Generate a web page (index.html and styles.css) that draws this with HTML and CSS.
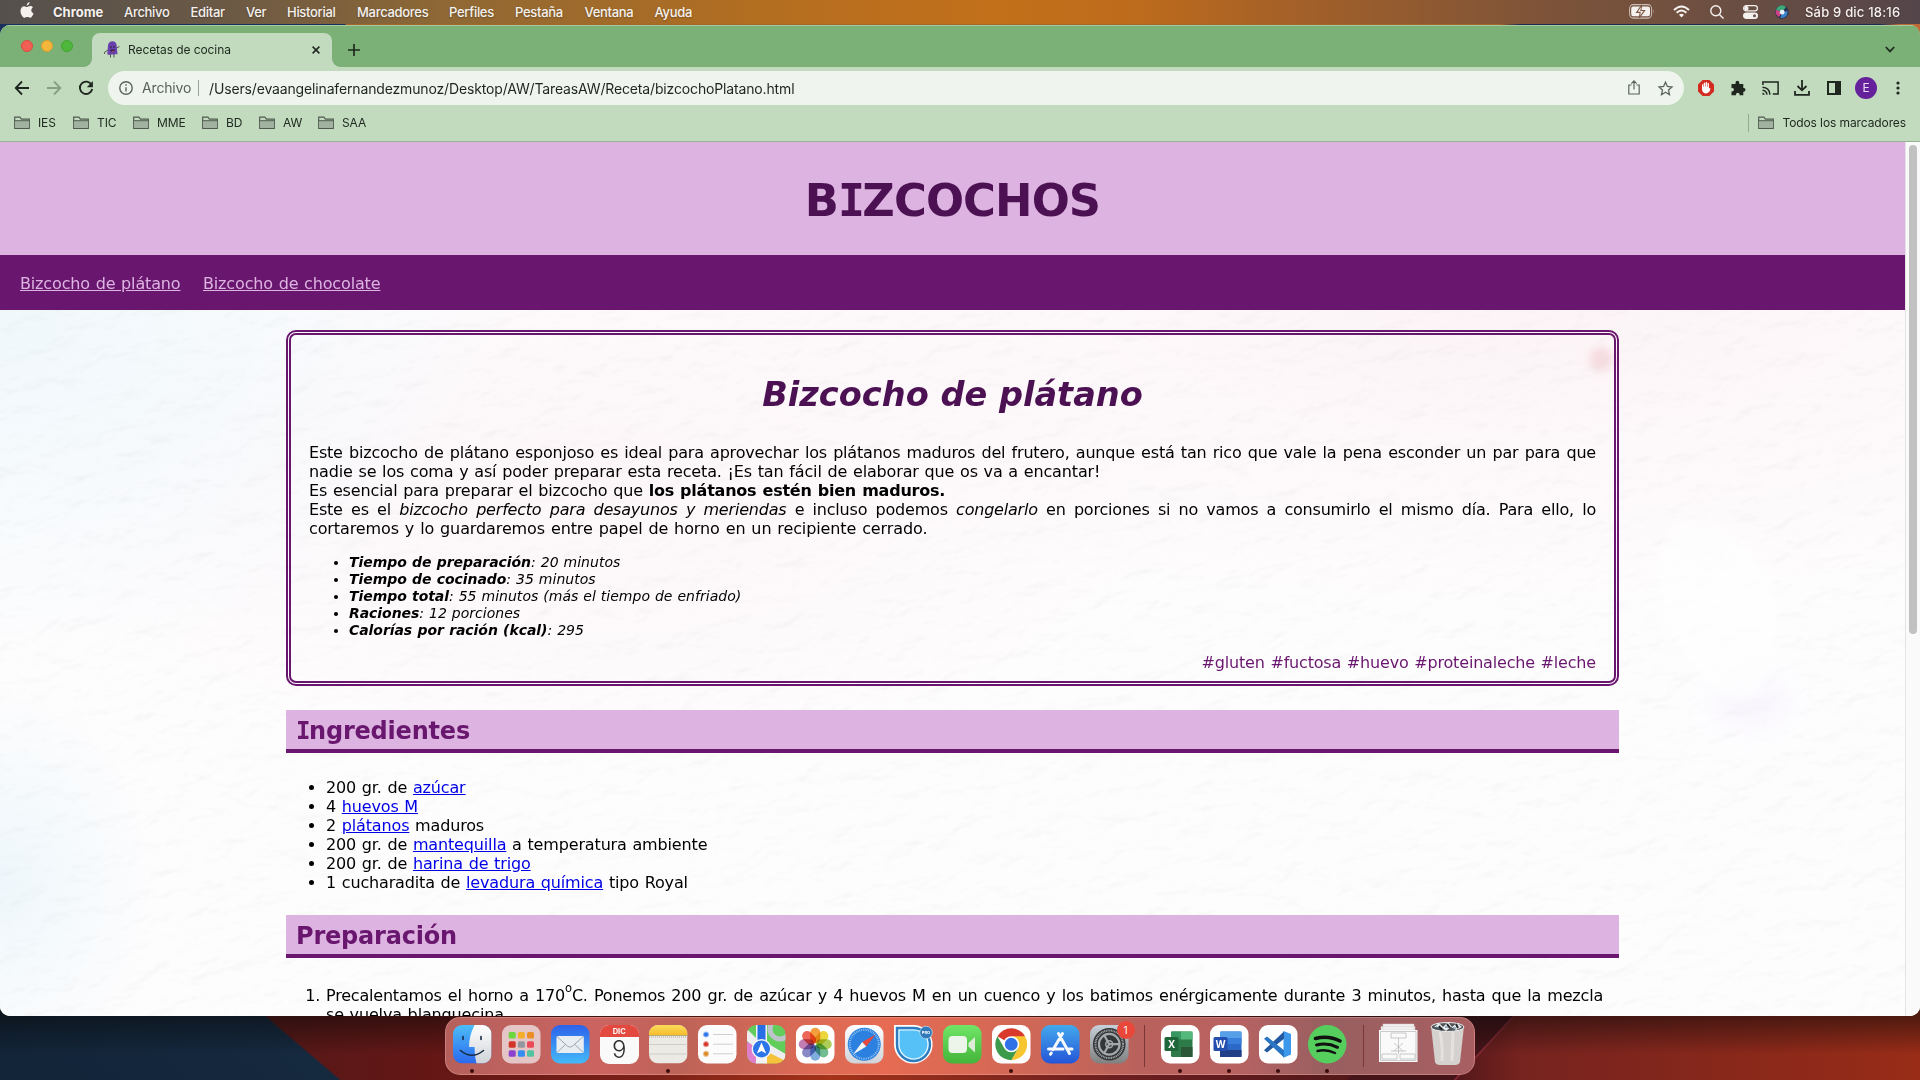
FILE: index.html
```html
<!DOCTYPE html>
<html lang="es">
<head>
<meta charset="utf-8">
<title>Recetas de cocina</title>
<link rel="stylesheet" href="styles.css">
</head>
<body>
<svg class="defs" width="0" height="0" aria-hidden="true">
  <defs>
    <symbol id="folder" viewBox="0 0 16 14"><path d="M.7 12.3V1.2h5.2l1.5 1.9h7.9v9.2z" fill="#c3dcbf" stroke="#505a50" stroke-width="1.2"/><path d="M1.3 5h13.4v7H1.3z" fill="#a1b3a0"/><path d="M.7 4.7h14.6" stroke="#505a50"/></symbol>
    <linearGradient id="gFinder" x2="0" y2="1"><stop stop-color="#4cbdf8"/><stop offset="1" stop-color="#2b68ee"/></linearGradient>
    <linearGradient id="gBlue" x2="0" y2="1"><stop stop-color="#2c62ea"/><stop offset="1" stop-color="#45b9f9"/></linearGradient>
    <linearGradient id="gStore" x2="0" y2="1"><stop stop-color="#43a9ec"/><stop offset="1" stop-color="#2455d8"/></linearGradient>
    <linearGradient id="gGrey" x2="0" y2="1"><stop stop-color="#ffffff"/><stop offset="1" stop-color="#cfd3d8"/></linearGradient>
    <linearGradient id="gSet" x2="0" y2="1"><stop stop-color="#c6d0da"/><stop offset="1" stop-color="#808080"/></linearGradient>
    <linearGradient id="gGreen" x2="0" y2="1"><stop stop-color="#70e566"/><stop offset="1" stop-color="#43b53a"/></linearGradient>
    <linearGradient id="gNote" x2="0" y2="1"><stop stop-color="#fbdc5c"/><stop offset="1" stop-color="#f5bd2a"/></linearGradient>
    <clipPath id="tile"><rect width="38.5" height="38.5" rx="9"/></clipPath>
  </defs>
</svg>

<header class="menubar">
  <svg class="apple" width="14" height="17" viewBox="0 0 14 17"><path d="M9.600 0C9.700 1.700 8.400 3.400 6.800 3.500 6.600 1.900 8 .300 9.600 0zM12.900 5.400c-1 .700-1.600 1.600-1.600 2.900 0 1.500.9 2.600 2.200 3.100-.6 1.800-2 4.300-3.400 4.300-1 0-1.500-.6-2.700-.6s-1.700.6-2.700.6C2.800 15.700.5 12.100.5 8.900.5 5.900 2.300 4.200 4.200 4.200c1.200 0 2.200.8 2.900.8.700 0 1.800-.9 3.200-.9 1 0 2 .5 2.600 1.300z" fill="#f4f1ee"/></svg>
  <nav class="menus"><b>Chrome</b><span>Archivo</span><span>Editar</span><span>Ver</span><span>Historial</span><span>Marcadores</span><span>Perfiles</span><span>Pestaña</span><span>Ventana</span><span>Ayuda</span></nav>
  <div class="status">
    <svg width="26" height="15" viewBox="0 0 26 13" preserveAspectRatio="none"><rect x=".6" y=".6" width="22" height="11.600" rx="3.500" fill="none" stroke="#c9beb6"/><rect x="2.200" y="2.200" width="18.800" height="8.400" rx="2" fill="#f5f1ee"/><path d="M24.200 4.500q1.400 1.900 0 3.800z" fill="#c9beb6"/><path d="M12.800.8 7.600 7.200h3.600L10.200 12l5.400-6.400h-3.700z" fill="#f5f1ee" stroke="#7a5541"/></svg>
    <svg width="17" height="13" viewBox="0 0 17 13" fill="none" stroke="#f5f1ee" stroke-width="2"><path d="M1 5Q8.500-2 16 5M3.600 7.700q4.900-4.400 9.800 0"/><path d="M8.500 12.500 6 9.800q2.500-2 5 0z" fill="#f5f1ee" stroke="none"/></svg>
    <svg width="14" height="14" viewBox="0 0 14 14" fill="none" stroke="#f5f1ee" stroke-width="1.400"><circle cx="5.800" cy="5.800" r="5"/><path d="m9.400 9.400 4.100 4.100"/></svg>
    <svg width="15" height="14" viewBox="0 0 15 14" fill="none" stroke="#f5f1ee" stroke-width="1.200"><rect x=".6" y=".6" width="13.800" height="5.200" rx="2.600"/><circle cx="3.400" cy="3.200" r="1.600" fill="#f5f1ee"/><rect x=".6" y="8" width="13.800" height="5.400" rx="2.700" fill="#f5f1ee"/><circle cx="11.500" cy="10.700" r="1.500" fill="#6c5148" stroke="none"/></svg>
    <svg width="14" height="14" viewBox="0 0 14 14"><circle cx="7" cy="7" r="6.800" fill="#29344f"/><path d="M1 5a6 6 0 0 1 10-3L7 7z" fill="#3ea878"/><path d="M1 5a6 6 0 0 0 3 7l3-5z" fill="#cf4285"/><path d="M12.500 6a6 6 0 0 1-7 7L7 7z" fill="#3b82cb"/><circle cx="7.200" cy="7.200" r="2.400" fill="#e9f4fa"/></svg>
    <time>Sáb 9 dic 18:16</time>
  </div>
</header>

<main class="window">
  <div class="tabstrip">
    <div class="lights"><i class="red"></i><i class="amber"></i><i class="green"></i></div>
    <div class="tab">
      <svg width="16" height="17" viewBox="0 0 16 17"><path d="M3.300 13.500 4 4Q5 .3 8.400.3 12 .5 12.600 4l.9 9.500-2-.5-1.800 1-1.600-.8-1.800.8z" fill="#6941ad"/><path d="M4 9 .6 11.200V13M12.500 7l3-1.500M6.500 13.500v3M10 13.500v3" stroke="#555" fill="none"/><path d="M6 8.500h5q-.5 2.800-2.500 2.800T6 8.500z" fill="#3b1f55"/><path d="M7 10.300h3l-1 1z" fill="#e3655c"/><circle cx="7" cy="6" r=".8" fill="#222"/><circle cx="10" cy="6" r=".8" fill="#222"/></svg>
      <span>Recetas de cocina</span>
      <svg class="x" width="8" height="8" viewBox="0 0 8 8" stroke="#202620" stroke-width="1.500"><path d="m.6.6 6.800 6.800M7.400.6.600 7.400"/></svg>
    </div>
    <svg class="plus" width="12" height="12" viewBox="0 0 12 12" stroke="#1c2a1c" stroke-width="1.700"><path d="M6 0v12M0 6h12"/></svg>
    <svg class="chevron" width="10" height="7" viewBox="0 0 10 7" fill="none" stroke="#1c2a1c" stroke-width="1.700"><path d="m.8 1 4.200 4.400L9.200 1"/></svg>
  </div>

  <div class="toolbar">
    <svg width="16" height="16" viewBox="0 0 16 16" fill="none" stroke="#1f261f" stroke-width="1.800"><path d="M15 8H2M8 1.500 1.700 8 8 14.500"/></svg>
    <svg width="16" height="16" viewBox="0 0 16 16" fill="none" stroke="#86a084" stroke-width="1.800"><path d="M1 8h13M8 1.500 14.300 8 8 14.500"/></svg>
    <svg width="16" height="16" viewBox="0 0 16 16" fill="none" stroke="#1f261f" stroke-width="1.900"><path d="M13.600 4.900A6.200 6.200 0 1 0 14.200 9"/><path d="M14.900 1v6.200H8.800z" fill="#1f261f" stroke="none"/></svg>
    <div class="omnibox">
      <svg width="14" height="14" viewBox="0 0 14 14" fill="none" stroke="#5b635c" stroke-width="1.400"><circle cx="7" cy="7" r="6.200"/><path d="M7 6.200v4.300M7 3.300v1.500"/></svg>
      <span class="scheme">Archivo</span><span class="url">/Users/evaangelinafernandezmunoz/Desktop/AW/TareasAW/Receta/bizcochoPlatano.html</span>
      <svg class="share" width="12" height="15" viewBox="0 0 12 15" fill="none" stroke="#5b635c" stroke-width="1.200"><path d="M3.500 5H.8v9h10.400V5H8.500M6 9.500V1.200M3.300 3.600 6 .9l2.700 2.700"/></svg>
      <svg width="15" height="15" viewBox="0 0 15 15" fill="none" stroke="#5b635c" stroke-width="1.300"><path d="m7.500 1.200 1.900 4.300 4.600.5-3.500 3.100 1 4.600-4-2.400-4 2.400 1-4.600L1 6l4.600-.5z"/></svg>
    </div>
    <div class="actions">
      <svg width="18" height="18" viewBox="0 0 18 18"><path d="M5.600 1h6.800L17 5.600v6.800L12.400 17H5.600L1 12.400V5.600z" fill="#d32b20"/><path d="M5 9.500V5.600q.7-.8 1.300 0V8l.5-.2V4q.7-.9 1.400 0v3.600h.5V3.300q.7-.8 1.400 0v4.400l.5.100V4.300q.7-.8 1.300 0v5.200q1-.8 1.500 0-.6 4.700-4.600 5Q5 14 5 9.500z" fill="#fff"/></svg>
      <svg width="16" height="16" viewBox="0 0 16 16"><path d="M1.500 4h4V3q0-2.300 1.900-2.300T9.300 3v1h4v4h.6q1.600.2 1.600 1.800t-1.600 1.900h-.6v3.600H9.600v-1q-.2-1.600-1.800-1.600T6 14.300v1H1.500v-3.900h.8q1.700-.2 1.700-1.800T2.300 7.900h-.8z" fill="#1f261f"/></svg>
      <svg width="17" height="14" viewBox="0 0 17 14" fill="none" stroke="#1f261f" stroke-width="1.500"><path d="M.9 4V.9h15.200v12.200h-5.300M.5 6.200q7 .3 7.400 7.400M.5 9.200q4 .4 4.500 4.400"/><path d="M.5 11.600q2 .2 2.200 2.200H.5z" fill="#1f261f" stroke="none"/></svg>
      <svg width="16" height="16" viewBox="0 0 16 16" fill="none" stroke="#1f261f" stroke-width="1.800"><path d="M8 0v10M3.500 6 8 10.300 12.500 6M1 11v3.800h14V11"/></svg>
      <svg width="14" height="14" viewBox="0 0 14 14"><path d="M0 0h14v14H0zM2 2v10h6V2z" fill="#1f261f" fill-rule="evenodd"/></svg>
      <span class="avatar">E</span>
      <svg width="4" height="14" viewBox="0 0 4 14" fill="#1f261f"><circle cx="2" cy="2" r="1.600"/><circle cx="2" cy="7" r="1.600"/><circle cx="2" cy="12" r="1.600"/></svg>
    </div>
  </div>

  <div class="bookmarks">
    <div class="marks">
      <span><svg width="16" height="14"><use href="#folder"/></svg>IES</span><span><svg width="16" height="14"><use href="#folder"/></svg>TIC</span><span><svg width="16" height="14"><use href="#folder"/></svg>MME</span><span><svg width="16" height="14"><use href="#folder"/></svg>BD</span><span><svg width="16" height="14"><use href="#folder"/></svg>AW</span><span><svg width="16" height="14"><use href="#folder"/></svg>SAA</span>
    </div>
    <span class="all"><svg width="16" height="14"><use href="#folder"/></svg>Todos los marcadores</span>
  </div>

  <div class="viewport">
    <div class="page">
      <svg class="paper" width="1905" height="874" aria-hidden="true">
        <filter id="grain" x="0" y="0" width="100%" height="100%" color-interpolation-filters="sRGB"><feTurbulence type="fractalNoise" baseFrequency=".03 .05" numOctaves="3" seed="8"/><feDiffuseLighting surfaceScale="3" diffuseConstant="1.150" lighting-color="#fff"><feDistantLight azimuth="250" elevation="60"/></feDiffuseLighting></filter>
        <filter id="soft" x="-100%" y="-100%" width="300%" height="300%"><feGaussianBlur stdDeviation="14"/></filter>
        <filter id="faint" x="-100%" y="-100%" width="300%" height="300%"><feGaussianBlur stdDeviation="4"/></filter>
        <g transform="rotate(-8 950 440)" opacity=".075"><rect x="-150" y="-260" width="2250" height="1400" filter="url(#grain)"/></g>
        <ellipse cx="1601" cy="217" rx="12" ry="12" fill="#e9a9b3" opacity=".3" filter="url(#faint)"/>
        <ellipse cx="1750" cy="560" rx="42" ry="28" fill="#eeeafc" opacity=".3" filter="url(#soft)"/>
      </svg>
      <svg class="paper glow" width="1905" height="874" aria-hidden="true"><path d="M1690 380q60 10 80 60 15 50-10 110-30 20-60-20-50-60-40-110 10-40 30-40z" fill="#fff" opacity=".7" filter="url(#faint)"/></svg>
      <header class="banner"><h1>B<span class="slab">I</span>ZCOCHOS</h1></header>
      <nav class="recipes"><a>Bizcocho de plátano</a><a>Bizcocho de chocolate</a></nav>
      <article class="recipe">
        <section class="card">
          <h2>Bizcocho de plátano</h2>
          <p class="full">Este bizcocho de plátano esponjoso es ideal para aprovechar los plátanos maduros del frutero, aunque está tan rico que vale la pena esconder un par para que</p>
          <p class="tight">nadie se los coma y así poder preparar esta receta. ¡Es tan fácil de elaborar que os va a encantar!</p>
          <p class="tight">Es esencial para preparar el bizcocho que <strong>los plátanos estén bien maduros.</strong></p>
          <p class="full">Este es el <em>bizcocho perfecto para desayunos y meriendas</em> e incluso podemos <em>congelarlo</em> en porciones si no vamos a consumirlo el mismo día. Para ello, lo</p>
          <p class="wide">cortaremos y lo guardaremos entre papel de horno en un recipiente cerrado.</p>
          <ul class="facts">
            <li><b>Tiempo de preparación</b>: 20 minutos</li>
            <li><b>Tiempo de cocinado</b>: 35 minutos</li>
            <li><b>Tiempo total</b>: 55 minutos (más el tiempo de enfriado)</li>
            <li><b>Raciones</b>: 12 porciones</li>
            <li><b>Calorías por ración (kcal)</b>: 295</li>
          </ul>
          <p class="tags">#gluten #fuctosa #huevo #proteinaleche #leche</p>
        </section>
        <h3><span class="slab">I</span>ngredientes</h3>
        <ul class="ingredients">
          <li>200 gr. de <a>azúcar</a></li>
          <li>4 <a>huevos M</a></li>
          <li>2 <a>plátanos</a> maduros</li>
          <li>200 gr. de <a>mantequilla</a> a temperatura ambiente</li>
          <li>200 gr. de <a>harina de trigo</a></li>
          <li>1 cucharadita de <a>levadura química</a> tipo Royal</li>
        </ul>
        <h3>Preparación</h3>
        <ol class="steps">
          <li><p class="full">Precalentamos el horno a 170<sup>o</sup>C. Ponemos 200 gr. de azúcar y 4 huevos M en un cuenco y los batimos enérgicamente durante 3 minutos, hasta que la mezcla</p><p>se vuelva blanquecina.</p></li>
        </ol>
      </article>
    </div>
    <div class="scrollbar"><div class="thumb"></div></div>
  </div>
</main>

<footer class="desk">
  <div class="dock">
    <div class="app open"><svg viewBox="0 0 38.500 38.500"><g clip-path="url(#tile)"><path d="M0 0h38.500v38.500H0z" fill="url(#gFinder)"/><path d="M21.500 0Q16 11 16 22h5.500q0 9 2 16.500h15V0z" fill="url(#gGrey)"/></g><path d="M10 11.500v3M28 11.500v3M7.500 25.500q11.500 9.500 23 0" fill="none" stroke="#182a44" stroke-width="1.600" stroke-linecap="round"/></svg></div>
    <div class="app"><svg viewBox="0 0 38.500 38.500"><rect width="38.500" height="38.500" rx="9" fill="#e5c6c7"/><g><rect x="6.700" y="7" width="7" height="6.500" rx="1.500" fill="#6cd63d"/><rect x="15.900" y="7" width="7" height="6.500" rx="1.500" fill="#f5ae2c"/><rect x="25" y="7" width="7" height="6.500" rx="1.500" fill="#ea8e27"/><rect x="6.700" y="16.200" width="7" height="6.500" rx="1.500" fill="#d13528"/><rect x="15.900" y="16.200" width="7" height="6.500" rx="1.500" fill="#92989e"/><rect x="25" y="16.200" width="7" height="6.500" rx="1.500" fill="#ec4a58"/><rect x="6.700" y="25.300" width="7" height="6.500" rx="1.500" fill="#8a41cf"/><rect x="15.900" y="25.300" width="7" height="6.500" rx="1.500" fill="#348df0"/><rect x="25" y="25.300" width="7" height="6.500" rx="1.500" fill="#51c39f"/></g></svg></div>
    <div class="app"><svg viewBox="0 0 38.500 38.500"><rect width="38.500" height="38.500" rx="9" fill="url(#gBlue)"/><rect x="5.500" y="11" width="27.300" height="17" rx="1.500" fill="#e8edf1"/><path d="m6 11.500 10.500 9.700q2.500 2 5 0L32.300 11.500M6 27.500l8.500-8M32.300 27.500l-8.500-8" fill="none" stroke="#9ba6b1"/></svg></div>
    <div class="app cal"><span class="mon">DIC</span><span class="day">9</span></div>
    <div class="app open"><svg viewBox="0 0 38.500 38.500"><g clip-path="url(#tile)"><path d="M0 0h38.500v38.500H0z" fill="#eceae4"/><path d="M0 0h38.500v10H0z" fill="url(#gNote)"/><path d="M0 10.500h38.500" stroke="#bba978"/><path d="M0 12h38.500" stroke="#aaa" stroke-dasharray="1 1"/><path d="M0 19.500h38.500M0 29h38.500" stroke="#d0cec9"/></g></svg></div>
    <div class="app"><svg viewBox="0 0 38.500 38.500"><rect width="38.500" height="38.500" rx="9" fill="#fcfcfc"/><g stroke="#d0d0d0"><path d="M15 9.500h20M15 19.200h20M15 28.800h20"/></g><g stroke-width="1"><circle cx="8" cy="9.500" r="2.600" fill="#2f76ee" stroke="#9bbcf2"/><circle cx="8" cy="19.200" r="2.600" fill="#d5392b" stroke="#efa19b"/><circle cx="8" cy="28.800" r="2.600" fill="#dc8c2b" stroke="#f0c490"/></g></svg></div>
    <div class="app"><svg viewBox="0 0 38.500 38.500"><g clip-path="url(#tile)"><path d="M0 0h38.500v38.500H0z" fill="#63cd5c"/><path d="M0 17 10 20v19H0z" fill="#dd7fcb"/><path d="M18 22 38.500 33v6H18z" fill="#f4c33b"/><path d="M20 18 38.500 29v7L17 25z" fill="#eeeef0"/><path d="M0 4 9 13v10L0 16z" fill="#eeeef0"/><path d="M9 0h11v39H9z" fill="#f3f3f5"/><path d="M10.500 0h8v24h-8z" fill="#276fe5"/><circle cx="33" cy="4" r="10" fill="none" stroke="#bcc3ca" stroke-width="5"/></g><circle cx="14.500" cy="24" r="9.200" fill="#2c75e9" stroke="#f4f4f4" stroke-width="1.400"/><path d="m14.500 17.500 4.700 11-4.700-2.600-4.700 2.600z" fill="#fff"/></svg></div>
    <div class="app"><svg viewBox="0 0 38.500 38.500"><rect width="38.500" height="38.500" rx="9" fill="#fff"/><g transform="translate(19.250 19.250)" class="petals"><rect x="-5" y="-16.500" width="10" height="15.500" rx="5" fill="#f28d1c"/><rect x="-5" y="-16.500" width="10" height="15.500" rx="5" fill="#e8cf1c" transform="rotate(45)"/><rect x="-5" y="-16.500" width="10" height="15.500" rx="5" fill="#9dc63c" transform="rotate(90)"/><rect x="-5" y="-16.500" width="10" height="15.500" rx="5" fill="#58b07c" transform="rotate(135)"/><rect x="-5" y="-16.500" width="10" height="15.500" rx="5" fill="#679fd8" transform="rotate(180)"/><rect x="-5" y="-16.500" width="10" height="15.500" rx="5" fill="#7474bd" transform="rotate(225)"/><rect x="-5" y="-16.500" width="10" height="15.500" rx="5" fill="#b767a5" transform="rotate(270)"/><rect x="-5" y="-16.500" width="10" height="15.500" rx="5" fill="#e94c39" transform="rotate(315)"/></g></svg></div>
    <div class="app"><svg viewBox="0 0 38.500 38.500"><rect width="38.500" height="38.500" rx="9" fill="url(#gGrey)"/><circle cx="19.250" cy="19.250" r="16.500" fill="#2c80df"/><circle cx="19.250" cy="19.250" r="14.500" fill="none" stroke="#a6d3fa" stroke-width="2" stroke-dasharray=".7 1.100"/><path d="m30.500 9.500-9.200 12-4.100-4.500z" fill="#e5483f"/><path d="M8 29.500 17.200 17l4.100 4.500z" fill="#f4f4f4"/></svg></div>
    <div class="app"><svg viewBox="0 0 38.500 38.500"><path d="M1 1h19a18.300 18.300 0 1 1-19 18.500z" fill="#56c1f7" stroke="#fff" stroke-width="2"/><path d="M3 3h17a16.500 16.500 0 1 1-17 16.500z" fill="#56c1f7" stroke="#2f7bbe" stroke-width="2.400"/><path d="M5 5h15a14.500 14.500 0 1 1-15 14.500z" fill="none" stroke="#eef8fd" stroke-width="1.200"/><circle cx="32" cy="7.500" r="6.300" fill="#3179b9" stroke="#bfe0f4" stroke-width=".7"/><text x="32" y="9.200" text-anchor="middle" class="pro">PRO</text></svg></div>
    <div class="app"><svg viewBox="0 0 38.500 38.500"><rect width="38.500" height="38.500" rx="9" fill="url(#gGreen)"/><rect x="5.500" y="11" width="18.500" height="17" rx="4" fill="#edf5eb"/><path d="m25.500 18 6.500-6v15.500l-6.500-6z" fill="#dcecd9"/></svg></div>
    <div class="app open"><svg viewBox="0 0 38.500 38.500"><rect width="38.500" height="38.500" rx="9" fill="#fff"/><path d="M19.250 19.250 5.400 11.250A16 16 0 0 1 33.100 11.250z" fill="#d93a2d"/><path d="M19.250 11.250h13.850a16 16 0 0 1-13.850 24l6.900-12z" fill="#f7c52f"/><path d="M5.400 11.250a16 16 0 0 0 13.850 24l6.900-12-13.800 0z" fill="#3c9a4b"/><circle cx="19.250" cy="19.250" r="8" fill="#fff"/><circle cx="19.250" cy="19.250" r="6.400" fill="#2f72e8"/></svg></div>
    <div class="app"><svg viewBox="0 0 38.500 38.500"><rect width="38.500" height="38.500" rx="9" fill="url(#gStore)"/><g stroke="#f6fafe" stroke-width="3" stroke-linecap="round"><path d="M21.500 8.500 12 24.800M17.500 8.500 28.500 28.500M7.500 24h14.500M26.500 24h4.500M10.300 28l-.8 1.300"/></g></svg></div>
    <div class="app"><svg viewBox="0 0 38.500 38.500"><rect width="38.500" height="38.500" rx="9" fill="url(#gSet)"/><circle cx="19.250" cy="19.250" r="16.300" fill="#343638"/><g fill="none" stroke="#a5a9ac"><circle cx="19.250" cy="19.250" r="13.800" stroke-width="2" stroke-dasharray="1 .7"/><circle cx="19.250" cy="19.250" r="10.300" stroke-width="2.200"/><circle cx="19.250" cy="19.250" r="3.500" stroke-width="1.500"/><path d="m19.200 19.200 11 0M19.200 19.200l-5.300-9.500M19.200 19.200l-5.300 9.500" stroke-width="2.200"/></g></svg><span class="badge">1</span></div>
    <div class="rule"></div>
    <div class="app open"><svg viewBox="0 0 38.500 38.500"><rect width="38.500" height="38.500" rx="9" fill="#fff"/><rect x="10" y="6.500" width="21.500" height="25.500" rx="1.500" fill="#2d7b48"/><path d="M20 6.500h11.500v8H20z" fill="#54b87d"/><path d="M10 6.500h10v8H10z" fill="#379762"/><path d="M20 22h11.500v10H20z" fill="#2b5937"/><rect x="3.500" y="12" width="14" height="14" rx="1.500" fill="#1f673b"/><text x="10.500" y="23" text-anchor="middle" class="letter">X</text></svg></div>
    <div class="app open"><svg viewBox="0 0 38.500 38.500"><rect width="38.500" height="38.500" rx="9" fill="#fff"/><rect x="10" y="6.500" width="21.500" height="25.500" rx="1.500" fill="#2c68c6"/><path d="M10 6.500h21.500v7H10z" fill="#57a0e8"/><path d="M10 13h21.500v6H10z" fill="#397edb"/><path d="M10 25h21.500v7H10z" fill="#203f86"/><rect x="3.500" y="12" width="14" height="14" rx="1.500" fill="#254fae"/><text x="10.500" y="23" text-anchor="middle" class="letter">W</text></svg></div>
    <div class="app open"><svg viewBox="0 0 38.500 38.500"><rect width="38.500" height="38.500" rx="9" fill="#fff"/><path d="M24.500 6 32 9v20.500l-7.500 3.200z" fill="#3c98ea"/><path d="M25 6.500v7.200L8 27.500 5 25.200z" fill="#2159a3"/><path d="M25 32.500v-7.200L8 11.500l-3 2.300z" fill="#2a75c4"/></svg></div>
    <div class="app open"><svg viewBox="0 0 38.500 38.500"><circle cx="19.250" cy="19.250" r="19.250" fill="#55ce5e"/><g fill="none" stroke="#111" stroke-linecap="round"><path d="M7.500 13.500q13-3.500 24.500 2.500" stroke-width="3.600"/><path d="M8.500 20q11-2.800 21 2.300" stroke-width="3"/><path d="M9.500 26q9-2.200 17.500 2" stroke-width="2.500"/></g></svg></div>
    <div class="rule"></div>
    <div class="app"><svg viewBox="0 0 38.500 38.500"><path d="M4-1h31v6H4zM2 1.500h34v6H2z" fill="#f2f0f0" stroke="#d4cccc" stroke-width=".5"/><path d="M0 5h38.500v32H0z" fill="#fafafa"/><g fill="none" stroke="#aaa" stroke-width=".6"><path d="M1.500 6.500h35.500v29H1.500zM12 8h15v5H12zM3 29h15v5H3zM21 29h15v5H21zM19.500 13v16M15 18l9 8M24 18l-9 8M12 26h15"/></g></svg></div>
    <div class="app"><svg viewBox="0 0 38.500 44" class="bin"><path d="M3 4h33l-4 36q-1 3-5 3H12q-4 0-5-3z" fill="#d4d1cf"/><path d="M12 10q3 14 2 29M25 10l-1 29" stroke="#e4e2e1" stroke-width="3" fill="none"/><ellipse cx="19.500" cy="5" rx="16.500" ry="4.500" fill="#505457" stroke="#eee"/><path d="m6 5 5-4 4 4 5-5 4 5 5-4 5 4-6 3-5-3-5 4-5-4z" fill="#e9ebed"/><path d="m11 4 3 4M19 2l3 4M28 2l2 4" stroke="#22262b" stroke-width="2"/><path d="m8 5 3 1M17 5h3M25 6h3" stroke="#3f7794"/></svg></div>
  </div>
</footer>
</body>
</html>
```
FILE: styles.css
```css
* { box-sizing: border-box; }
html, body { margin: 0; height: 100%; overflow: hidden; }
body {
  display: flex; flex-direction: column; width: 1920px; height: 1080px;
  font-family: Inter, "Liberation Sans", sans-serif;
  background: linear-gradient(90deg, #1b2f5c 345px, #a8642a 346px 1500px, #1d2b50 1520px 1880px, #c06a35 1900px);
}
.defs { position: absolute; }
svg { display: block; flex: none; overflow: visible; }
h1, h2, h3, p, ul, ol { margin: 0; padding: 0; }

.menubar {
  height: 24px; flex: none; display: flex; align-items: center; padding: 0 19px 1px 20px;
  font-size: 13px; font-weight: 500; line-height: 16px; color: #f5f1ee; letter-spacing: -.3px;
  background: linear-gradient(90deg, #54504d, #6b5945 220px, #8e6835 440px, #b36e20 760px, #c3701a 1000px, #bd6b1c 1140px, #a66127 1280px, #7f5438 1530px, #6c4f42 1720px, #54454a 1920px);
  text-shadow: 0 1px 2px rgba(0,0,0,.3);
}
.apple { margin: -2px 19px 0 0; }
.menus { display: grid; grid-template-columns: 71px 66.500px 55.500px 41px 70px 92px 66px 69.500px 70px 60px; flex: 1; }
.menus b { font-weight: 700; letter-spacing: 0; }
.status { display: flex; align-items: center; }
.status svg:nth-child(1) { margin-right: 18px; }
.status svg:nth-child(2) { margin-right: 20px; }
.status svg:nth-child(3) { margin-right: 19px; }
.status svg:nth-child(4) { margin-right: 17px; }
.status svg:nth-child(5) { margin-right: 16px; }
.status time { width: 96px; letter-spacing: .2px; white-space: nowrap; }

.window {
  height: 991px; margin-top: 1px; flex: none; display: flex; flex-direction: column; overflow: hidden;
  border-radius: 10px; background: #c2dbbe;
}
.tabstrip { height: 42px; flex: none; display: flex; align-items: flex-end; background: #7bb076; border-top: 1px solid #a3cba0; }
.lights { display: flex; gap: 8px; width: 92px; padding: 0 0 15px 21px; }
.lights i { width: 12px; height: 12px; border-radius: 50%; border: 1px solid #d94b40; background: #f05f53; }
.lights .amber { background: #f5b63c; border-color: #dc9f2c; }
.lights .green { background: #4fb73c; border-color: #41a42f; }
.tab { position: relative; width: 240px; height: 34px; padding: 0 12px 1px; display: flex; align-items: center; gap: 8px; border-radius: 8px 8px 0 0; background: #c2dbbe; font-size: 12px; letter-spacing: -.08px; color: #1e281e; }
.tab::before, .tab::after { content: ""; position: absolute; bottom: 0; width: 8px; height: 8px; }
.tab::before { left: -8px; background: radial-gradient(circle at 0 0, #7bb076 7.500px, #c2dbbe 8px); }
.tab::after { right: -8px; background: radial-gradient(circle at 100% 0, #7bb076 7.500px, #c2dbbe 8px); }
.tab .x { margin-left: auto; }
.plus { margin: 0 0 11px 16px; }
.chevron { margin: 0 25px 14px auto; }

.toolbar { height: 42px; flex: none; display: flex; align-items: center; padding: 0 6px 0 14px; }
.toolbar > svg { margin-right: 16px; }
.toolbar > svg:nth-child(3) { margin-right: 14px; }
.omnibox { width: 1576px; height: 34px; display: flex; align-items: center; padding: 0 11px; border-radius: 17px; background: #eff5ee; font-size: 14px; letter-spacing: -.150px; color: #1f241f; }
.scheme { width: 57px; height: 16px; line-height: 16px; margin: 0 10px 0 9px; border-right: 1px solid #9aa39a; color: #59615a; }
.share { margin: -2px 18px 0 auto; }
.actions { display: grid; grid-template-columns: repeat(7, 32px); align-items: center; justify-items: center; margin-left: 6px; }
.avatar { width: 22px; height: 22px; border-radius: 50%; background: #65219b; color: #e9dcf2; font-size: 12px; line-height: 22px; text-align: center; }

.bookmarks { height: 33px; flex: none; display: flex; justify-content: space-between; align-items: flex-start; padding: 5px 14px 0 14px; border-bottom: 1px solid #96b194; font-size: 12px; line-height: 18px; color: #222b22; letter-spacing: -.1px; }
.marks { display: grid; grid-template-columns: 59px 60px 69px 57px 59px 60px; }
.marks span, .all { display: flex; align-items: center; gap: 8px; }
.all { border-left: 1px solid #91aa90; padding-left: 9px; }

.viewport { flex: 1; min-height: 0; display: flex; background: #fff; }
.page {
  position: relative; z-index: 0; width: 1905px; overflow: hidden; color: #000;
  font: 16px/19px "DejaVu Sans", sans-serif; letter-spacing: -.150px; word-spacing: .8px;
  background:
    radial-gradient(ellipse 500px 350px at 0 180px, #f0f8fc, transparent),
    radial-gradient(ellipse 160px 200px at 0 740px, #eef7fb, transparent),
    radial-gradient(ellipse 900px 300px at 1500px 170px, #fcf4f6, transparent),
    radial-gradient(ellipse 600px 300px at 600px 330px, #fcf6f8, transparent),
    #fefdfe;
}
.paper { position: absolute; left: 0; top: 0; z-index: -1; mix-blend-mode: multiply; }
.glow { mix-blend-mode: normal; }
.banner { height: 113px; display: flex; align-items: center; justify-content: center; padding-top: 5px; background: #ddb3e1; }
.banner h1 { font-size: 44.800px; line-height: 54px; letter-spacing: -.9px; color: #4c1152; }
.slab { font-family: "DejaVu Sans Mono", monospace; letter-spacing: -.06em; }
.recipes { height: 55px; display: flex; align-items: center; gap: 22.500px; padding: 2px 20px 0; background: #69176e; letter-spacing: -.150px; }
.recipes a { color: #ddb3e1; text-decoration: underline; }
.recipe { width: 1333px; margin: 20px auto 0; }
.card { height: 356px; padding: 10px 18px 9px; border: 5px double #69176e; border-radius: 10px; }
.card h2 { margin: 29px 0 28px; font-size: 33.600px; line-height: 41px; font-style: italic; text-align: center; letter-spacing: 0; word-spacing: 0; color: #4c1152; }
p { white-space: nowrap; }
.full { white-space: normal; text-align-last: justify; word-spacing: 0; letter-spacing: -.2px; }
.tight { letter-spacing: -.140px; }
.tight strong { letter-spacing: -.230px; }
.wide { letter-spacing: -.110px; word-spacing: .95px; }
.facts { margin: 16px 0 14px; padding-left: 40px; font-size: 14px; line-height: 17px; font-style: italic; letter-spacing: .02px; word-spacing: .5px; }
.facts b { letter-spacing: -.06px; }
.tags { text-align: right; color: #69176e; letter-spacing: -.180px; }
h3 { height: 43px; padding: 6px 10px 0; border-bottom: 4px solid #69176e; background: #ddb3e1; color: #69176e; font-size: 24px; line-height: 30px; letter-spacing: -.2px; }
.card + h3 { margin-top: 24px; }
.ingredients { margin: 25px 0 23px; padding-left: 40px; }
.ingredients a { color: #0000e6; text-decoration: underline; }
.steps { margin-top: 28px; padding: 0 16px 0 40px; }
.steps sup { font-size: 11.500px; line-height: 0; vertical-align: 9.500px; }

.scrollbar { width: 15px; padding: 3px 3px 0; border-left: 1px solid #e4e4e4; background: #fafafa; }
.thumb { width: 8px; height: 489px; border-radius: 4px; background: #c1c1c1; }

.desk {
  flex: 1; display: flex; justify-content: center; margin-top: -10px; padding-top: 11px; position: relative; z-index: -1;
  background:
    linear-gradient(rgba(8,8,8,.5) 10px, transparent 48px),
    linear-gradient(40.500deg, #122438, #15293f 220px, transparent 222px),
    linear-gradient(132.700deg, transparent 1040px, #451418 1041px 1118px, #8a2a38 1119px, transparent 1121px),
    linear-gradient(90deg, #571818 280px, #641715 440px, #7b2018 650px, #a33319 830px, #6a1e20 1130px, #4a1518 1440px, #76231f 1520px, #982c17 1920px);
}
.dock {
  width: 1030px; height: 58px; padding: 7px 7px 0; display: flex; border-radius: 15px; border: 1px solid rgba(255,190,180,.35);
  background: linear-gradient(90deg, #b5605c, #cc6460 160px, #bd6358 230px, #db6a55 360px, #e66b52 440px, #cd6757 600px, #b9625c 690px, #b86262 790px, #985f60 880px, #a85f62);
}
.app { position: relative; width: 38.500px; height: 38.500px; margin-right: 10.500px; flex: none; }
.app svg { width: 38.500px; height: 38.500px; }
.app .bin { height: 44px; margin-top: -3px; }
.petals rect { mix-blend-mode: multiply; opacity: .85; }
.open::after { content: ""; position: absolute; left: 17px; top: 44px; width: 4px; height: 4px; border-radius: 50%; background: #3c0b0b; }
.cal { border-radius: 9px; background: #fafafa; overflow: hidden; text-align: center; color: #333; }
.mon { display: block; height: 12px; background: #e4493f; color: #fff; font-size: 7.500px; line-height: 13px; font-weight: 700; }
.day { display: block; font-size: 24px; line-height: 25px; font-weight: 300; }
.badge { position: absolute; right: -6px; top: -4px; width: 18px; height: 18px; border-radius: 50%; background: #e9473a; color: #fff; font-size: 10px; line-height: 18px; text-align: center; }
.rule { width: 1px; height: 42px; margin: 0 16px 0 5px; background: #7c3734; flex: none; }
.rule ~ .rule { margin: 0 15px 0 6px; }
.letter { font: 700 10px "Open Sans", sans-serif; fill: #fff; }
.pro { font: 700 4px Inter, sans-serif; fill: #fff; }
```
